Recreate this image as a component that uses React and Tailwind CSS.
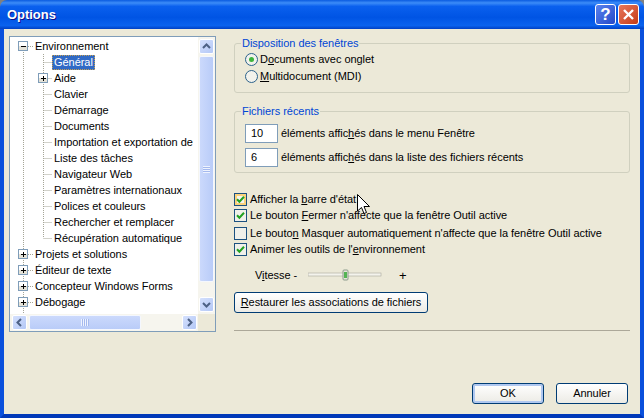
import React from 'react';

const treeItems = [
  { label: 'Environnement', level: 0, expander: 'minus' },
  { label: 'Général', level: 1, selected: true },
  { label: 'Aide', level: 1, expander: 'plus' },
  { label: 'Clavier', level: 1 },
  { label: 'Démarrage', level: 1 },
  { label: 'Documents', level: 1 },
  { label: 'Importation et exportation de', level: 1 },
  { label: 'Liste des tâches', level: 1 },
  { label: 'Navigateur Web', level: 1 },
  { label: 'Paramètres internationaux', level: 1 },
  { label: 'Polices et couleurs', level: 1 },
  { label: 'Rechercher et remplacer', level: 1 },
  { label: 'Récupération automatique', level: 1, last: true },
  { label: 'Projets et solutions', level: 0, expander: 'plus' },
  { label: 'Éditeur de texte', level: 0, expander: 'plus' },
  { label: 'Concepteur Windows Forms', level: 0, expander: 'plus' },
  { label: 'Débogage', level: 0, expander: 'plus' },
];

// Small +/- box of the tree
const Expander = ({ x, type }) => (
  <g>
    <rect x={x - 4.5} y="3.5" width="9" height="9" fill="#e4e2d8" stroke="#7f9db9" />
    <rect x={x - 4} y="4" width="8" height="4" fill="#ffffff" />
    <path d={`M${x - 2} 8.5h5`} stroke="#000" />
    {type === 'plus' && <path d={`M${x + 0.5} 6v5`} stroke="#000" />}
  </g>
);

// Dotted guides + expander, drawn in a fixed width cell
const TreeGuides = ({ item, index }) => {
  const width = item.level === 0 ? 24 : 42;
  const rootX = 13.5;
  const childX = 33.5;
  const dots = { stroke: '#a5a597', strokeDasharray: '1 1' };
  return (
    <svg width={width} height="16" className="shrink-0">
      <path d={index === 0 ? `M${rootX} 8V16` : `M${rootX} 0V16`} {...dots} />
      {item.level === 0 && <path d="M18 8.5h6" {...dots} />}
      {item.level === 1 && (
        <>
          <path d={item.last ? `M${childX} 0V8` : `M${childX} 0V16`} {...dots} />
          <path d={`M${childX} 8.5H42`} {...dots} />
        </>
      )}
      {item.expander && <Expander x={item.level === 0 ? 13 : 33} type={item.expander} />}
    </svg>
  );
};

const TreeRow = ({ item, index }) => (
  <div className="flex h-4 items-center whitespace-nowrap">
    <TreeGuides item={item} index={index} />
    {item.selected ? (
      <span className="h-[15px] border border-dotted border-[#c8a050] bg-[#316ac5] px-px leading-[13px] text-white">{item.label}</span>
    ) : (
      <span className={item.level === 0 ? 'pl-px' : 'pl-[2px]'}>{item.label}</span>
    )}
  </div>
);

const Chevron = ({ d }) => (
  <svg width="9" height="9" viewBox="0 0 9 9">
    <path d={d} fill="none" stroke="#4d6185" strokeWidth="2" />
  </svg>
);

const ScrollButton = ({ d }) => (
  <div className="flex h-[15px] w-[15px] shrink-0 items-center justify-center rounded-[2px] border border-white bg-gradient-to-br from-[#d4e0fd] to-[#b4c8f6]">
    <Chevron d={d} />
  </div>
);

const VerticalScrollbar = () => (
  <div className="flex w-[17px] flex-1 shrink-0 flex-col bg-[#f6f5ee] pb-[2px] pl-px pt-[2px]">
    <ScrollButton d="M1 6l3.5-3.5L8 6" />
    <div className="mt-[2px] flex h-[226px] w-[15px] items-center justify-center rounded-[2px] border border-[#f4f7fe] bg-gradient-to-r from-[#cbd9fc] to-[#b9ccf8]">
      <div className="h-[7px] w-[7px] bg-[repeating-linear-gradient(to_bottom,#eef3fe_0,#eef3fe_1px,#a4b9ee_1px,#a4b9ee_2px)]" />
    </div>
    <div className="flex-1" />
    <ScrollButton d="M1 3l3.5 3.5L8 3" />
  </div>
);

const HorizontalScrollbar = () => (
  <div className="flex h-[17px] shrink-0 items-center bg-[#f6f5ee] pl-[2px] pr-px">
    <ScrollButton d="M6 1L2.5 4.5L6 8" />
    <div className="ml-[2px] flex h-[15px] w-[112px] items-center justify-center rounded-[2px] border border-[#f4f7fe] bg-gradient-to-b from-[#cbd9fc] to-[#b9ccf8]">
      <div className="h-[7px] w-[8px] bg-[repeating-linear-gradient(to_right,#eef3fe_0,#eef3fe_1px,#a4b9ee_1px,#a4b9ee_2px)]" />
    </div>
    <div className="flex-1" />
    <ScrollButton d="M3 1l3.5 3.5L3 8" />
  </div>
);

const TreePanel = () => (
  <div className="flex h-[296px] w-[207px] shrink-0 border border-[#7f9db9] bg-white">
    <div className="flex min-w-0 flex-1 flex-col">
      <div className="flex-1 overflow-hidden pt-px">
        {treeItems.map((item, i) => (
          <TreeRow key={item.label} item={item} index={i} />
        ))}
        <svg width="24" height="3" className="block">
          <path d="M13.5 0V3" stroke="#a5a597" strokeDasharray="1 1" />
        </svg>
      </div>
      <HorizontalScrollbar />
    </div>
    <div className="flex flex-col">
      <VerticalScrollbar />
      <div className="h-[17px] w-[17px] bg-[#ece9d8]" />
    </div>
  </div>
);

const Radio = ({ checked }) => (
  <svg width="13" height="13" viewBox="0 0 13 13" className="shrink-0">
    <circle cx="6.5" cy="6.5" r="6" fill="#f2f2ec" stroke="#2c628b" />
    {checked && <circle cx="6.5" cy="6.5" r="2.5" fill="#3cb43c" />}
  </svg>
);

const Checkbox = ({ checked, hot }) => (
  <svg width="13" height="13" viewBox="0 0 13 13" className="shrink-0">
    <rect x="0.5" y="0.5" width="12" height="12" fill={hot ? '#fbd27c' : '#f0f0ea'} stroke="#1c5180" />
    {hot && <rect x="3" y="3" width="7" height="7" fill="#f6f5ee" />}
    {checked && <path d="M3 6.2l2.4 2.5L10 3.8" fill="none" stroke="#21a121" strokeWidth="2" />}
  </svg>
);

const GroupBox = ({ title, className, children }) => (
  <fieldset className={`rounded-[3px] border border-[#d0d0bf] ${className}`}>
    <legend className="ml-[6px] px-px leading-[14px] text-[#0046d5]">{title}</legend>
    {children}
  </fieldset>
);

const CountRow = ({ value, children }) => (
  <div className="flex items-center gap-[3px]">
    <div className="flex h-[19px] w-[33px] shrink-0 items-center border border-[#7f9db9] bg-white pl-[5px]">{value}</div>
    <span className="whitespace-nowrap">{children}</span>
  </div>
);

const CheckRow = ({ checked, hot, className = '', children }) => (
  <div className={`flex h-4 items-center gap-[3px] whitespace-nowrap ${className}`}>
    <Checkbox checked={checked} hot={hot} />
    <span>{children}</span>
  </div>
);

const XpButton = ({ className, children }) => (
  <button className={`flex h-[21px] items-center justify-center whitespace-nowrap rounded-[3px] border border-[#003c74] bg-gradient-to-b from-white to-[#ecebe5] ${className}`}>
    {children}
  </button>
);

const TitleButton = ({ className, children }) => (
  <div className={`flex h-[21px] w-[21px] items-center justify-center rounded-[3px] border border-white text-white ${className}`}>
    {children}
  </div>
);

const App = () => {
  return (
    <div className="relative flex h-[418px] w-[644px] flex-col overflow-hidden bg-[#808080] text-[11px] leading-none tracking-[-0.04px] text-black [font-family:'Liberation_Sans',sans-serif]">
      {/* Title bar */}
      <div className="flex h-[29px] shrink-0 items-center justify-between rounded-t-[7px] bg-[linear-gradient(to_bottom,#0a5be0_0%,#3c8cf8_10%,#0a60ee_22%,#0054e4_60%,#0a62ee_88%,#0040c4_100%)] pl-[7px] pr-[5px]">
        <span className="text-[13px] font-bold text-white [text-shadow:1px_1px_#0f1089]">Options</span>
        <div className="flex gap-[2px]">
          <TitleButton className="bg-gradient-to-br from-[#5a82ee] to-[#2448c8] text-[17px] font-bold">?</TitleButton>
          <TitleButton className="bg-gradient-to-br from-[#e8775a] to-[#c43a12]">
            <svg width="13" height="13" viewBox="0 0 13 13">
              <path d="M2 2l9 9M11 2l-9 9" stroke="#fff" strokeWidth="2.4" />
            </svg>
          </TitleButton>
        </div>
      </div>

      {/* Window body */}
      <div className="flex min-h-0 flex-1 flex-col border-x-4 border-b-4 border-x-[#0a50dc] border-b-[#0038b8] bg-[#ece9d8] pl-[5px] pr-[10px] pt-[7px]">
        <div className="flex gap-[18px]">
          <TreePanel />

          <div className="flex min-w-0 flex-1 flex-col">
            <GroupBox title="Disposition des fenêtres" className="h-[57px]">
              <div className="flex flex-col gap-[3px] pl-[10px] pt-[2px]">
                <div className="flex h-[14px] items-center gap-[2px]">
                  <Radio checked />
                  <span className="pt-px">D<u>o</u>cuments avec onglet</span>
                </div>
                <div className="flex h-[14px] items-center gap-[2px]">
                  <Radio />
                  <span className="pt-px"><u>M</u>ultidocument (MDI)</span>
                </div>
              </div>
            </GroupBox>

            <GroupBox title="Fichiers récents" className="mt-[11px] h-[69px]">
              <div className="flex flex-col gap-[5px] pl-[10px] pt-[6px]">
                <CountRow value="10">éléments affic<u>h</u>és dans le menu Fenêtre</CountRow>
                <CountRow value="6">éléments affic<u>h</u>és dans la liste des fichiers récents</CountRow>
              </div>
            </GroupBox>

            <div className="mt-[18px] flex flex-col">
              <CheckRow checked hot>Afficher la <u>b</u>arre d'état</CheckRow>
              <CheckRow checked>Le bouton <u>F</u>ermer n'affecte que la fenêtre Outil active</CheckRow>
              <CheckRow className="mt-[2px]">Le bouto<u>n</u> Masquer automatiquement n'affecte que la fenêtre Outil active</CheckRow>
              <CheckRow checked>Animer les outils de l'<u>e</u>nvironnement</CheckRow>
            </div>

            <div className="mt-[10px] flex h-4 items-center pl-[21px]">
              <span className="w-[53px] whitespace-nowrap">V<u>i</u>tesse -</span>
              <svg width="74" height="16" viewBox="0 0 74 16" className="shrink-0">
                <rect x="0" y="6" width="73" height="3" fill="#f4f3ec" stroke="#a8a89c" strokeWidth="0.6" />
                <rect x="35" y="3" width="5" height="10" rx="1" fill="#e6e6da" stroke="#8c9c8c" />
                <rect x="36" y="5" width="3" height="6" fill="#54b454" />
              </svg>
              <span className="ml-[17px] text-[13px]">+</span>
            </div>

            <XpButton className="mt-[9px] w-[194px]"><span><u>R</u>estaurer les associations de fichiers</span></XpButton>

            <div className="mt-[17px] h-[2px] border-t border-[#aca899] border-b-white" />
          </div>
        </div>

        <div className="mt-auto flex justify-end gap-3 pb-[10px] pr-[2px]">
          <XpButton className="w-[72px] shadow-[inset_0_0_0_2px_#b0c8f0]">OK</XpButton>
          <XpButton className="w-[72px]">Annuler</XpButton>
        </div>
      </div>

      {/* Mouse pointer over the first checkbox label */}
      <svg width="14" height="22" viewBox="0 0 14 22" className="absolute left-[357px] top-[194px]">
        <path d="M0.5 0.5V17l4-3.5 2.5 6 2.5-1-2.5-6h5.5z" fill="#fff" stroke="#000" />
      </svg>
    </div>
  );
};

export default App;
